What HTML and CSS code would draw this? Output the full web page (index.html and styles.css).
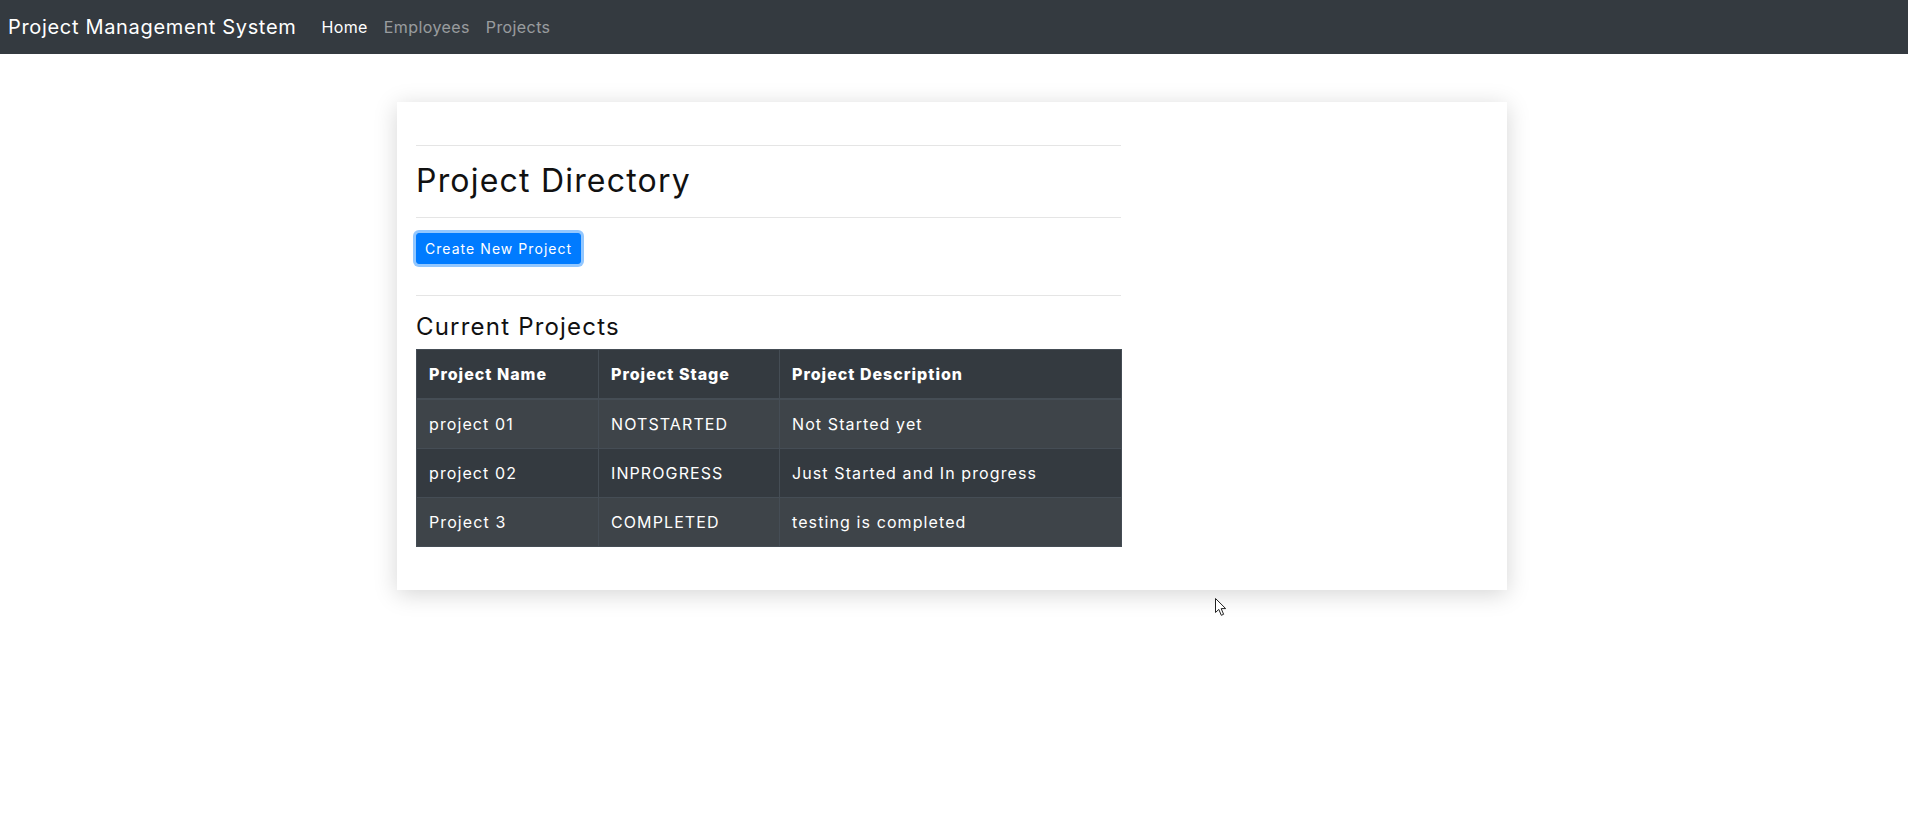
FILE: index.html
```html
<!DOCTYPE html>
<html lang="en">
<head>
<meta charset="utf-8">
<title>Project Management System</title>
<link rel="stylesheet" href="styles.css">
</head>
<body>
<nav class="navbar">
  <a class="brand" href="#">Project Management System</a>
  <ul class="nav">
    <li><a class="nav-link active" href="#">Home</a></li>
    <li><a class="nav-link" href="#">Employees</a></li>
    <li><a class="nav-link" href="#">Projects</a></li>
  </ul>
</nav>
<main class="page">
  <section class="card">
    <div class="content">
      <hr class="rule rule-top">
      <h2 class="title">Project Directory</h2>
      <hr class="rule rule-mid">
      <button class="btn" type="button">Create New Project</button>
      <hr class="rule rule-low">
      <h4 class="subtitle">Current Projects</h4>
      <table class="table">
        <thead>
          <tr>
            <th class="c1">Project Name</th>
            <th class="c2">Project Stage</th>
            <th class="c3">Project Description</th>
          </tr>
        </thead>
        <tbody>
          <tr><td>project 01</td><td>NOTSTARTED</td><td>Not Started yet</td></tr>
          <tr><td>project 02</td><td>INPROGRESS</td><td>Just Started and In progress</td></tr>
          <tr><td>Project 3</td><td>COMPLETED</td><td>testing is completed</td></tr>
        </tbody>
      </table>
    </div>
  </section>
</main>
<svg class="cursor" width="14" height="21" viewBox="0 0 14 21" aria-hidden="true">
  <path d="M1.5 1.5 L1.5 15.5 L4.8 12.4 L7.3 18.3 L9.6 17.3 L7.2 11.6 L11.7 11.6 Z" fill="#fff" stroke="#222" stroke-width="1" stroke-linejoin="miter"/>
</svg>
</body>
</html>
```

FILE: styles.css
```css
* { box-sizing: border-box; }

html, body {
  margin: 0;
  padding: 0;
  background: #fff;
}

body {
  font-family: Inter, "Open Sans", "Noto Sans", sans-serif;
  font-size: 16px;
  color: #212529;
  position: relative;
  min-height: 827px;
}

.navbar {
  display: flex;
  align-items: center;
  height: 54px;
  padding: 0 8px;
  background: #343a40;
}

.brand {
  color: #fff;
  font-size: 20px;
  text-decoration: none;
  margin-right: 17px;
  letter-spacing: 0.67px;
  line-height: 30px;
}

.nav {
  display: flex;
  list-style: none;
  margin: 0;
  padding: 0;
}

.nav-link {
  display: block;
  padding: 0 8px;
  font-size: 16px;
  line-height: 24px;
  letter-spacing: 0.4px;
  color: rgba(255, 255, 255, 0.5);
  text-decoration: none;
}

.nav-link.active { color: #fff; }

.page {
  padding-top: 48px;
  padding-left: 397px;
}

.card {
  width: 1110px;
  background: #fff;
  padding: 20px 19px 43px;
  box-shadow: 0 4px 22px rgba(0, 0, 0, 0.17);
}

.content {
  width: 705px;
}

.rule {
  border: 0;
  border-top: 1px solid rgba(0, 0, 0, 0.1);
  margin: 0;
}

.rule-top { margin-top: 23px; }
.rule-mid { margin-top: 17px; }
.rule-low { margin-top: 31px; }

.title {
  margin: 16px 0 0;
  font-size: 32px;
  font-weight: 400;
  line-height: 38px;
  letter-spacing: 1.2px;
  color: #111;
}

.btn {
  display: block;
  margin-top: 15px;
  font-family: inherit;
  font-size: 14px;
  line-height: 21px;
  padding: 4px 8px;
  color: #fff;
  background: #007bff;
  border: 1px solid #007bff;
  border-radius: 3px;
  letter-spacing: 1.05px;
  box-shadow: 0 0 0 3px rgba(38, 143, 255, 0.5);
}

.subtitle {
  margin: 16px 0 0;
  font-size: 24px;
  font-weight: 400;
  line-height: 29px;
  letter-spacing: 1.2px;
  color: #111;
}

.table {
  margin-top: 8px;
  width: 705px;
  border-collapse: collapse;
  color: #fff;
  background: #343a40;
  table-layout: fixed;
}

.table th,
.table td {
  border: 1px solid #454d55;
  padding: 12px;
  line-height: 24px;
  text-align: left;
  font-size: 16px;
  letter-spacing: 1.1px;
  white-space: nowrap;
}

.table th {
  font-weight: 800;
  border-bottom-width: 2px;
  letter-spacing: 1px;
}

.table tbody tr:nth-child(odd) {
  background: rgba(255, 255, 255, 0.05);
}

.c1 { width: 182px; }
.c2 { width: 181px; }
.c3 { width: 342px; }

.cursor {
  position: absolute;
  left: 1214px;
  top: 597px;
}
```
